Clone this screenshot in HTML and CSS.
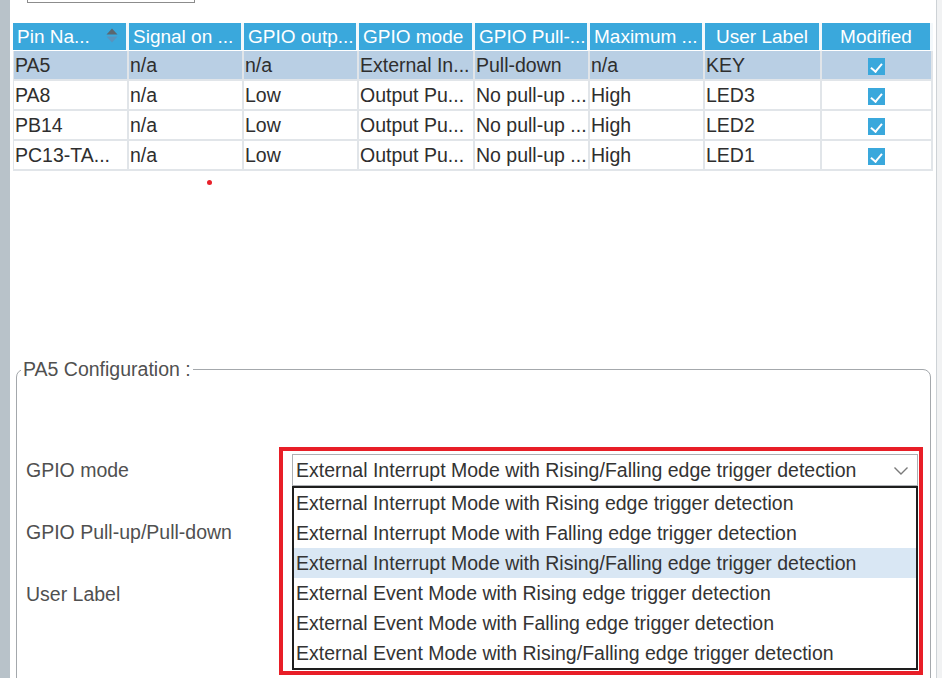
FILE: index.html
```html
<!DOCTYPE html>
<html lang="en">
<head>
    <meta charset="UTF-8">
    <title>Pin Configuration</title>
    <link rel="stylesheet" href="styles.css">
</head>
<body>
    <div class="window">
        <div class="side-left"></div>
        <div class="main">
            <div class="top-box"></div>
            <div class="pins">
                <table class="pin-table">
                    <colgroup>
                        <col style="width: 116px">
                        <col style="width: 115px">
                        <col style="width: 115px">
                        <col style="width: 116px">
                        <col style="width: 115px">
                        <col style="width: 115px">
                        <col style="width: 117px">
                        <col style="width: 111px">
                    </colgroup>
                    <thead>
                        <tr>
                            <th class="sortable">Pin Na...
                                <svg class="sort-icon" width="12" height="16" viewBox="0 0 12 16">
                                    <polygon points="6,0.5 11.5,6.5 0.5,6.5" fill="#5b6770"/>
                                    <polygon points="0.5,8.5 11.5,8.5 6,14.5" fill="#5a93bd"/>
                                </svg>
                            </th>
                            <th>Signal on ...</th>
                            <th>GPIO outp...</th>
                            <th>GPIO mode</th>
                            <th>GPIO Pull-...</th>
                            <th>Maximum ...</th>
                            <th class="center">User Label</th>
                            <th class="center">Modified</th>
                        </tr>
                    </thead>
                    <tbody>
                        <tr class="selected">
                            <td>PA5</td>
                            <td>n/a</td>
                            <td>n/a</td>
                            <td>External In...</td>
                            <td>Pull-down</td>
                            <td>n/a</td>
                            <td>KEY</td>
                            <td class="center"><span class="check"></span></td>
                        </tr>
                        <tr>
                            <td>PA8</td>
                            <td>n/a</td>
                            <td>Low</td>
                            <td>Output Pu...</td>
                            <td>No pull-up ...</td>
                            <td>High</td>
                            <td>LED3</td>
                            <td class="center"><span class="check"></span></td>
                        </tr>
                        <tr>
                            <td>PB14</td>
                            <td>n/a</td>
                            <td>Low</td>
                            <td>Output Pu...</td>
                            <td>No pull-up ...</td>
                            <td>High</td>
                            <td>LED2</td>
                            <td class="center"><span class="check"></span></td>
                        </tr>
                        <tr>
                            <td>PC13-TA...</td>
                            <td>n/a</td>
                            <td>Low</td>
                            <td>Output Pu...</td>
                            <td>No pull-up ...</td>
                            <td>High</td>
                            <td>LED1</td>
                            <td class="center"><span class="check"></span></td>
                        </tr>
                    </tbody>
                </table>
            </div>
            <span class="dot"></span>

            <fieldset class="config">
                <legend>PA5 Configuration :</legend>
                <div class="rows">
                    <div class="row">
                        <label>GPIO mode</label>
                        <div class="combo">
                            <div class="select">
                                <span>External Interrupt Mode with Rising/Falling edge trigger detection</span>
                                <svg class="chevron" width="16" height="10" viewBox="0 0 16 10">
                                    <polyline points="1.5,1.5 8,8 14.5,1.5" fill="none" stroke="#7a7a7a" stroke-width="1.4"/>
                                </svg>
                            </div>
                            <ul class="dropdown">
                                <li>External Interrupt Mode with Rising edge trigger detection</li>
                                <li>External Interrupt Mode with Falling edge trigger detection</li>
                                <li class="active">External Interrupt Mode with Rising/Falling edge trigger detection</li>
                                <li>External Event Mode with Rising edge trigger detection</li>
                                <li>External Event Mode with Falling edge trigger detection</li>
                                <li>External Event Mode with Rising/Falling edge trigger detection</li>
                            </ul>
                            <div class="mark"></div>
                        </div>
                    </div>
                    <div class="row">
                        <label>GPIO Pull-up/Pull-down</label>
                    </div>
                    <div class="row">
                        <label>User Label</label>
                    </div>
                </div>
            </fieldset>
        </div>
        <div class="side-right"></div>
    </div>
</body>
</html>
```

FILE: styles.css
```css
* {
    box-sizing: border-box;
}
body {
    margin: 0;
    background: #ffffff;
    font-family: "Liberation Sans", Arial, sans-serif;
    font-size: 19.5px;
    color: #2e2e2e;
    overflow: hidden;
}
.window {
    display: flex;
    height: 678px;
    overflow: hidden;
}
.side-left {
    width: 10px;
    background: #b8c2c9;
}
.main {
    flex: 1;
    position: relative;
    padding-left: 3px;
}
.side-right {
    width: 6px;
    border-left: 1px solid #cdd2d6;
    background: #f1f2f3;
}
.top-box {
    width: 168px;
    height: 3px;
    margin-left: 14px;
    border: 1px solid #8c8c8c;
    border-top: none;
}

/* pin table */
.pins {
    height: 355px;
    padding-top: 20px;
}
.pin-table {
    width: 920px;
    table-layout: fixed;
    border-collapse: separate;
    border-spacing: 0;
}
.pin-table th {
    height: 28px;
    padding: 0 4px;
    background: #3aa8dc;
    color: #ffffff;
    font-size: 19px;
    font-weight: normal;
    text-align: left;
    white-space: nowrap;
    overflow: hidden;
    border-right: 3px solid #f3f8fb;
    border-bottom: 1px solid #ffffff;
}
.pin-table th.sortable {
    position: relative;
}
.sort-icon {
    position: absolute;
    right: 8px;
    top: 5px;
}
.pin-table td {
    height: 30px;
    padding: 0 1px;
    white-space: nowrap;
    overflow: hidden;
    border-right: 2px solid #e1e5e9;
    border-bottom: 2px solid #e1e5e9;
}
.pin-table td:first-child {
    border-left: 1px solid #e1e5e9;
}
.pin-table .center {
    text-align: center;
}
.pin-table tr.selected td {
    background: #b9cfe4;
}
.check {
    display: inline-block;
    width: 17px;
    height: 17px;
    background: #3aa8dc;
    position: relative;
    vertical-align: middle;
}
.check::after {
    content: "";
    position: absolute;
    left: 5px;
    top: 3px;
    width: 5px;
    height: 9px;
    border: solid #ffffff;
    border-width: 0 2px 2px 0;
    transform: rotate(40deg);
}
.dot {
    position: absolute;
    left: 197px;
    top: 180px;
    width: 5px;
    height: 5px;
    border-radius: 50%;
    background: #e8202a;
}

/* configuration panel */
.config {
    margin: 0 5px 0 3px;
    padding: 0 5px 200px 9px;
    border: 1px solid #a4a8ac;
    border-radius: 8px;
    color: #505050;
}
.config legend {
    margin-left: -5px;
    padding: 0 2px;
    line-height: 22px;
}
.rows {
    margin-top: 59px;
}
.row {
    display: flex;
    align-items: center;
    height: 62px;
}
.row label {
    width: 266px;
    flex-shrink: 0;
}
.combo {
    position: relative;
    width: 626px;
    z-index: 2;
}
.select {
    display: flex;
    align-items: center;
    justify-content: space-between;
    width: 626px;
    height: 32px;
    padding: 0 8px 0 3px;
    border: 1px solid #adb0b4;
    background: #ffffff;
    color: #333333;
    white-space: nowrap;
}
.chevron {
    margin-top: 2px;
}
.dropdown {
    position: absolute;
    top: 32px;
    left: 0;
    width: 626px;
    margin: 0;
    padding: 0;
    list-style: none;
    border: 2px solid #1e1e1e;
    background: #ffffff;
    color: #333333;
}
.dropdown li {
    height: 30px;
    line-height: 30px;
    padding-left: 2px;
    white-space: nowrap;
}
.dropdown li.active {
    background: #d9e7f4;
}
.mark {
    position: absolute;
    left: -13px;
    top: -7px;
    width: 644px;
    height: 228px;
    border: 4px solid #e81e27;
    pointer-events: none;
}
```
